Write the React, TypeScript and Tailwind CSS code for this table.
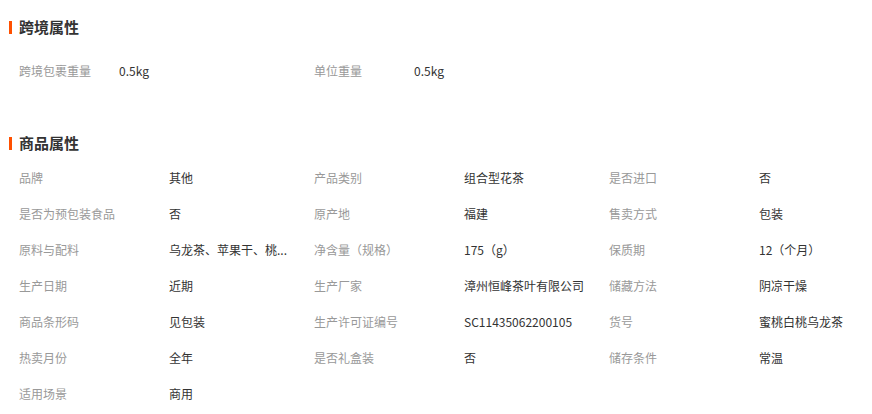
import { FC } from "react";

type Attr = { label: string; value: string };

const crossBorder: Attr[] = [
    { label: "跨境包裹重量", value: "0.5kg" },
    { label: "单位重量", value: "0.5kg" },
];

const goods: Attr[] = [
    { label: "品牌", value: "其他" },
    { label: "产品类别", value: "组合型花茶" },
    { label: "是否进口", value: "否" },
    { label: "是否为预包装食品", value: "否" },
    { label: "原产地", value: "福建" },
    { label: "售卖方式", value: "包装" },
    { label: "原料与配料", value: "乌龙茶、苹果干、桃..." },
    { label: "净含量（规格）", value: "175（g）" },
    { label: "保质期", value: "12（个月）" },
    { label: "生产日期", value: "近期" },
    { label: "生产厂家", value: "漳州恒峰茶叶有限公司" },
    { label: "储藏方法", value: "阴凉干燥" },
    { label: "商品条形码", value: "见包装" },
    { label: "生产许可证编号", value: "SC11435062200105" },
    { label: "货号", value: "蜜桃白桃乌龙茶" },
    { label: "热卖月份", value: "全年" },
    { label: "是否礼盒装", value: "否" },
    { label: "储存条件", value: "常温" },
    { label: "适用场景", value: "商用" },
];

const SectionTitle: FC<{ title: string }> = ({ title }) => (
    <div className="flex items-center h-[28px] pl-[9px]">
        <span className="w-[3px] h-[13px] bg-[#ff5000] mr-[7px]" />
        <h2 className="text-[15px] font-bold text-[#333]">{title}</h2>
    </div>
);

const AttrItem: FC<{ item: Attr; labelWidth: string }> = ({ item, labelWidth }) => (
    <div className="flex items-center w-[295px] h-[36px]">
        <span className={`${labelWidth} shrink-0 text-[#999] whitespace-nowrap`}>{item.label}</span>
        <span className="text-[#333] whitespace-nowrap">{item.value}</span>
    </div>
);

const App: FC = () => {
    return (
        <div
            className="w-[872px] h-[414px] bg-white text-[12px] overflow-hidden"
            style={{ fontFamily: '"Noto Sans CJK SC", "Noto Sans", sans-serif' }}
        >
            <div className="pt-[13px]">
                <SectionTitle title="跨境属性" />
                <div className="flex flex-wrap pl-[19px] mt-[12px]">
                    {crossBorder.map(item => (
                        <AttrItem key={item.label} item={item} labelWidth="w-[100px]" />
                    ))}
                </div>
            </div>
            <div className="mt-[40px]">
                <SectionTitle title="商品属性" />
                <div className="grid grid-cols-[295px_295px_295px] pl-[19px] mt-[3px]">
                    {goods.map(item => (
                        <AttrItem key={item.label} item={item} labelWidth="w-[150px]" />
                    ))}
                </div>
            </div>
        </div>
    );
};

export default App;
